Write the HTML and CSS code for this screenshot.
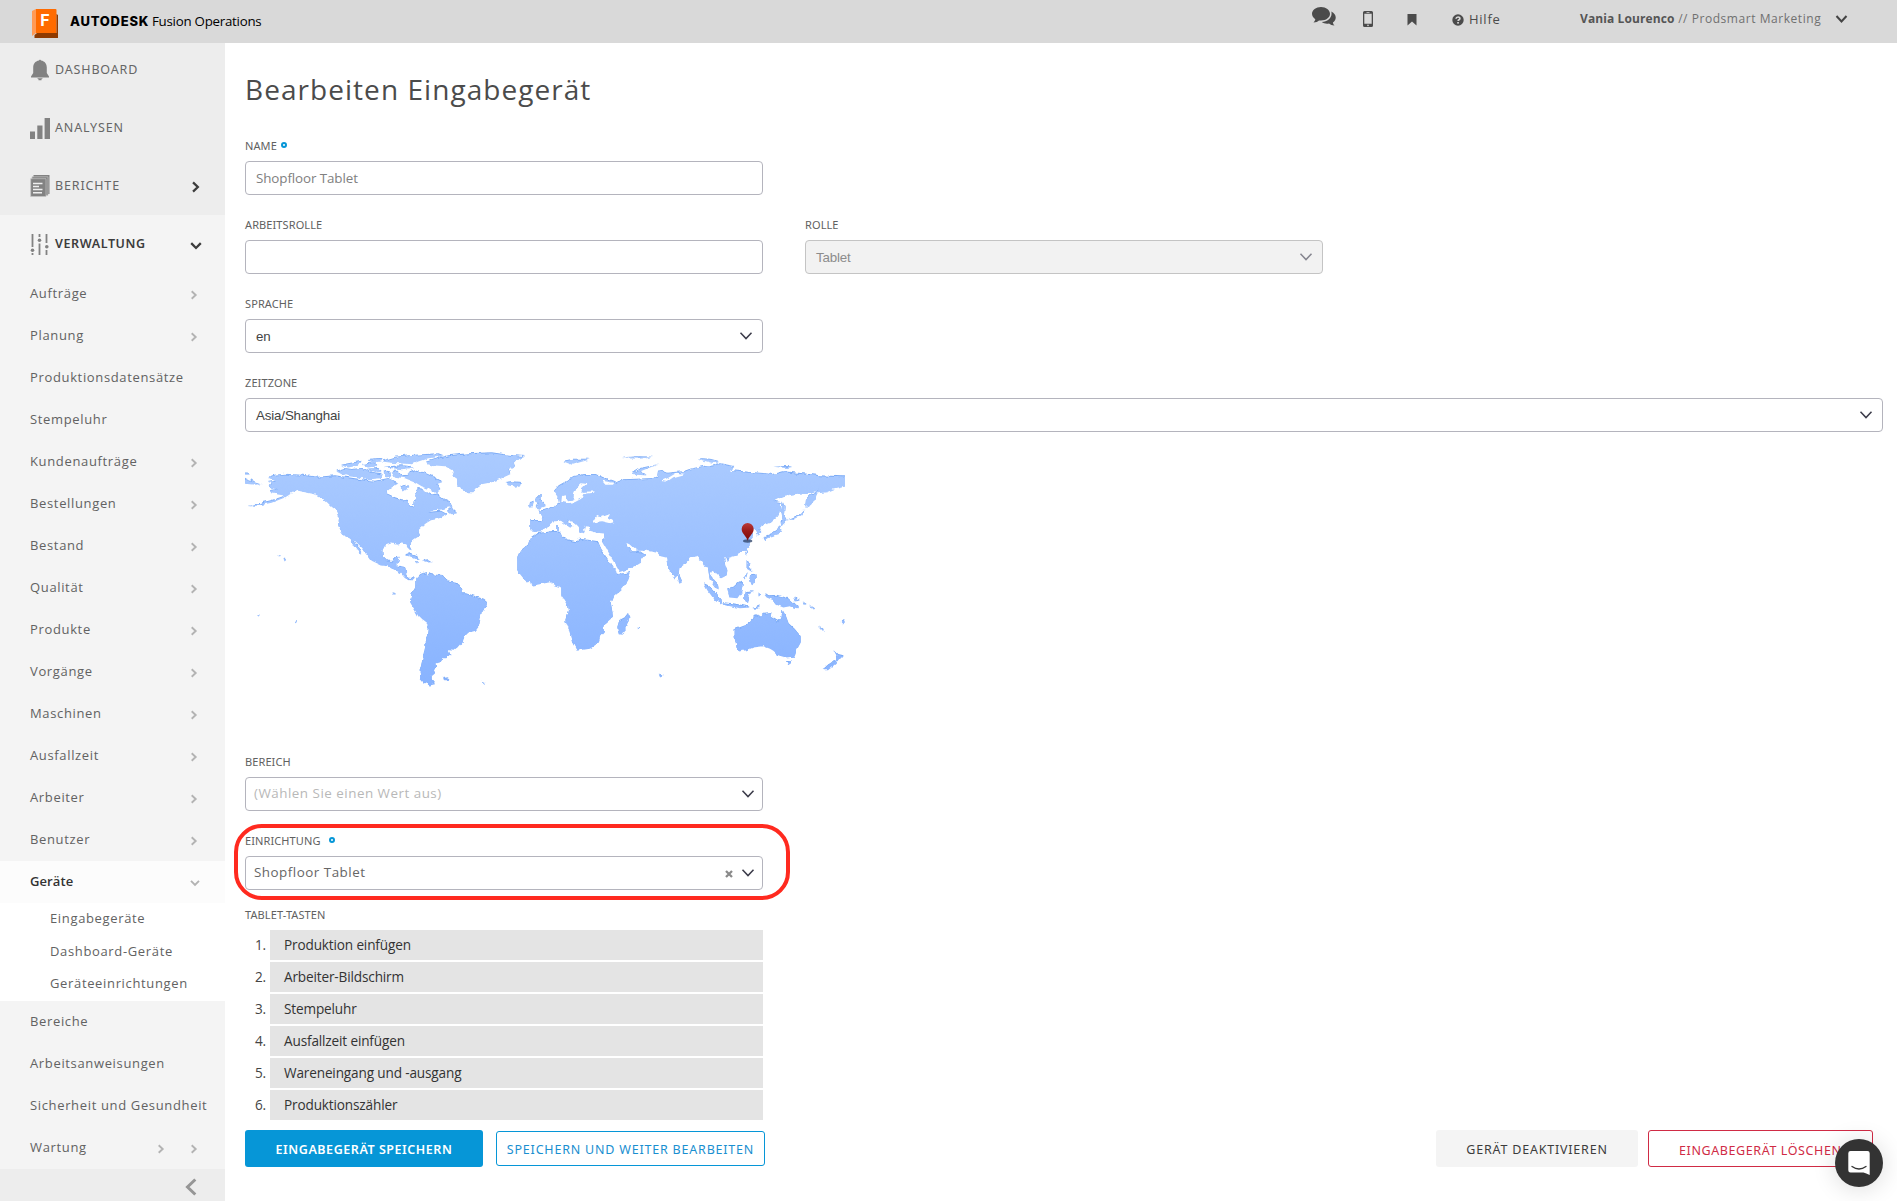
FILE: index.html
```html
<!DOCTYPE html>
<html lang="de">
<head>
<meta charset="utf-8">
<title>Bearbeiten Eingabegerät</title>
<link rel="stylesheet" href="styles.css">
</head>
<body>
<svg class="defs" width="0" height="0">
  <symbol id="right" viewBox="0 0 8 10"><path d="M1.7 1.2 5.7 5 1.7 8.8" fill="none" stroke="currentColor" stroke-width="1.9"/></symbol>
  <symbol id="down" viewBox="0 0 10 8"><path d="M1 1.8 5 5.8 9 1.8" fill="none" stroke="currentColor" stroke-width="1.9"/></symbol>
  <symbol id="caret" viewBox="0 0 14 10"><path d="M1.5 1.8 7 7.6 12.5 1.8" fill="none" stroke="currentColor" stroke-width="1.5"/></symbol>
</svg>
<header class="topbar">
  <svg class="logo" viewBox="0 0 26 29" width="26" height="29"><path d="M0 2 4 0V24L0 27Z" fill="#ff9a55"/><path d="M4 0H23.500Q24.500 0 24.500 1V24H4Z" fill="#ff6b00"/><path d="M2.500 26 5 24H24.500V5L26 6V29H2.500Z" fill="#8f3a00"/></svg>
  <span class="logo-f">F</span>
  <span class="brand">AUTODESK</span><span class="product">Fusion Operations</span>
  <div class="tools">
    <svg class="i-chat" viewBox="0 0 24 19" width="24" height="19" fill="#4b4b4b"><path d="M9 0C4 0 0 3 0 6.800 0 9 1.300 11 3.300 12.200 3 13.600 2.400 14.500 1.500 15.500 4 15.300 5.800 14.500 7 13.400 13 14.200 18 11.200 18 6.800 18 3 14 0 9 0Z"/><path d="M19.300 4.500C20.800 10 16 14.800 9.800 15 11.600 16.500 14.400 17 17 16.500 18.500 17.700 20.200 18.500 22.500 18.500 21.500 17.500 21.100 16.600 20.900 15.400 25 12.800 24.800 7 19.300 4.500Z"/></svg>
    <svg class="i-phone" viewBox="0 0 10 16" width="10" height="16"><path fill="#4b4b4b" fill-rule="evenodd" d="M1.500 0H8.500Q10 0 10 1.500V14.500Q10 16 8.500 16H1.500Q0 16 0 14.500V1.500Q0 0 1.500 0ZM1.300 2.800V12.800H8.700V2.800ZM5 13.600A.8.8 0 1 0 5 15.200.8.8 0 1 0 5 13.600ZM3.500 1V1.700H6.500V1Z"/></svg>
    <svg class="i-mark" viewBox="0 0 10 12" width="10" height="12"><path fill="#4b4b4b" d="M.500 0H9.500V11.500L5 7.500.500 11.500Z"/></svg>
    <svg class="i-help" viewBox="0 0 12 12" width="12" height="12"><circle cx="6" cy="6" r="5.700" fill="#4b4b4b"/><path d="M4 4.700C4.200 2.300 8 2.400 7.900 4.600 7.800 5.800 6.200 5.700 6.100 7" fill="none" stroke="#d9d9d9" stroke-width="1.600"/><rect x="5.200" y="8" width="1.700" height="1.600" fill="#d9d9d9"/></svg>
    <span class="help">Hilfe</span>
    <span class="user"><b>Vania Lourenco</b> // Prodsmart Marketing</span>
    <svg class="i-user" width="13" height="10" viewBox="0 0 13 10"><path d="M1.500 2 6.500 7.500 11.500 2" fill="none" stroke="#444" stroke-width="2"/></svg>
  </div>
</header>
<div class="shell">
  <nav class="side">
    <div class="mains">
      <div class="main"><svg class="mi" viewBox="0 0 20 22" width="20" height="22" fill="#828282"><path d="M9 1.500C9 .4 11 .4 11 1.500 15 2.200 16.800 5 16.800 8.500V14L19 17.500V18.500H1V17.500L3.200 14V8.500C3.200 5 5 2.200 9 1.500Z"/><path d="M7 19.300H13L11.500 20.300V21.300H8.500V20.300Z"/></svg><span>DASHBOARD</span></div>
      <div class="main"><svg class="mi" viewBox="0 0 20 22" width="20" height="22" fill="#828282"><path d="M0 14.500H5V22H0ZM7.300 8.500H12.500V22H7.300ZM14.600 1H20V22H14.600Z"/></svg><span>ANALYSEN</span></div>
      <div class="main"><svg class="mi" viewBox="0 0 20 22" width="20" height="22"><path fill="#828282" d="M3.500 0H19.500V19H3.500Z"/><path fill="#828282" stroke="#c4c4c4" stroke-width=".7" d="M2 1.800H18V20.300H2Z"/><path fill="#828282" stroke="#c4c4c4" stroke-width=".7" d="M.700 3.700H16V21.500H.700Z"/><path stroke="#eee" stroke-width="1.500" d="M3 8.500H12.500M3 11.500H9M3 14.500H12.500M3 17.700H12"/></svg><span>BERICHTE</span><svg class="go dark"><use href="#right"/></svg></div>
    </div>
    <div class="group">
      <div class="main open"><svg class="mi" viewBox="0 0 20 22" width="20" height="22" fill="#828282"><path d="M1.600 1H3.400V14H1.600ZM1.600 20H3.400V22H1.600ZM8.600 1H10.400V4H8.600ZM8.600 10.500H10.400V22H8.600ZM15.600 1H17.400V10H15.600ZM15.600 17H17.400V22H15.600Z"/><circle cx="2.500" cy="17.300" r="1.800"/><circle cx="9.500" cy="7.300" r="1.800"/><circle cx="16.800" cy="13.800" r="1.800"/></svg><span>VERWALTUNG</span><svg class="dn dark"><use href="#down"/></svg></div>
      <div class="item"><span>Aufträge</span><svg class="go"><use href="#right"/></svg></div>
      <div class="item"><span>Planung</span><svg class="go"><use href="#right"/></svg></div>
      <div class="item"><span>Produktionsdatensätze</span></div>
      <div class="item"><span>Stempeluhr</span></div>
      <div class="item"><span>Kundenaufträge</span><svg class="go"><use href="#right"/></svg></div>
      <div class="item"><span>Bestellungen</span><svg class="go"><use href="#right"/></svg></div>
      <div class="item"><span>Bestand</span><svg class="go"><use href="#right"/></svg></div>
      <div class="item"><span>Qualität</span><svg class="go"><use href="#right"/></svg></div>
      <div class="item"><span>Produkte</span><svg class="go"><use href="#right"/></svg></div>
      <div class="item"><span>Vorgänge</span><svg class="go"><use href="#right"/></svg></div>
      <div class="item"><span>Maschinen</span><svg class="go"><use href="#right"/></svg></div>
      <div class="item"><span>Ausfallzeit</span><svg class="go"><use href="#right"/></svg></div>
      <div class="item"><span>Arbeiter</span><svg class="go"><use href="#right"/></svg></div>
      <div class="item"><span>Benutzer</span><svg class="go"><use href="#right"/></svg></div>
      <div class="item active"><span>Geräte</span><svg class="dn"><use href="#down"/></svg></div>
      <div class="subs"><span>Eingabegeräte</span><span>Dashboard-Geräte</span><span>Geräteeinrichtungen</span></div>
      <div class="item"><span>Bereiche</span></div>
      <div class="item"><span>Arbeitsanweisungen</span></div>
      <div class="item"><span>Sicherheit und Gesundheit</span></div>
      <div class="item"><span>Wartung</span><svg class="go"><use href="#right"/></svg><svg class="go second"><use href="#right"/></svg></div>
    </div>
    <div class="collapse"><svg viewBox="0 0 12 18" width="12" height="18"><path d="M10.300 1.500 2.500 9 10.300 16.500" fill="none" stroke="#969696" stroke-width="3"/></svg></div>
  </nav>
  <main class="content">
    <h1>Bearbeiten Eingabegerät</h1>
    <div class="field"><label>NAME<i class="req"></i></label><div class="box muted">Shopfloor Tablet</div></div>
    <div class="pair">
      <div class="field"><label>ARBEITSROLLE</label><div class="box"></div></div>
      <div class="field"><label>ROLLE</label><div class="box native disabled"><span>Tablet</span><svg class="caret"><use href="#caret"/></svg></div></div>
    </div>
    <div class="field"><label>SPRACHE</label><div class="box native"><span>en</span><svg class="caret"><use href="#caret"/></svg></div></div>
    <div class="field wide"><label>ZEITZONE</label><div class="box native"><span>Asia/Shanghai</span><svg class="caret"><use href="#caret"/></svg></div></div>
    <svg class="map" viewBox="0 21 1800 900" width="600" height="300">
      <defs>
        <filter id="coast" filterUnits="userSpaceOnUse" x="0" y="21" width="1800" height="800" color-interpolation-filters="sRGB"><feTurbulence type="fractalNoise" baseFrequency=".06" numOctaves="2" seed="4" result="n"/><feDisplacementMap in="SourceGraphic" in2="n" scale="13" xChannelSelector="R" yChannelSelector="G"/></filter>
        <linearGradient id="sea" gradientUnits="userSpaceOnUse" x1="0" y1="30" x2="0" y2="740"><stop offset="0" stop-color="#abcbff"/><stop offset="1" stop-color="#88b3ff"/></linearGradient>
        <linearGradient id="pin" x1="0" y1="0" x2="0" y2="1"><stop offset="0" stop-color="#bb3a38"/><stop offset=".45" stop-color="#9a1a1a"/><stop offset="1" stop-color="#7c0b0b"/></linearGradient>
        <g id="land">
          <g transform="translate(-30 0)">
            <path d="M100 112 120 104 150 101 200 104 250 110 300 106 340 112 380 118 420 122 460 114 475 122 490 128 470 140 458 150 460 162 480 172 500 178 520 180 524 196 534 200 536 186 546 172 540 158 548 144 560 146 575 156 590 164 604 160 612 166 630 180 648 188 652 200 640 200 620 206 596 208 580 216 600 214 618 212 636 222 620 230 600 236 588 238 572 248 556 262 548 276 552 286 540 294 524 306 524 316 530 328 522 326 514 310 500 308 486 312 468 308 450 314 442 330 444 350 456 362 472 362 478 352 494 350 490 364 486 376 510 380 514 402 524 414 540 412 536 418 524 418 510 412 496 396 480 388 460 376 440 374 410 360 396 340 378 318 362 302 356 298 370 320 382 342 374 338 360 318 346 294 330 286 318 270 310 256 308 240 312 226 306 210 290 198 276 184 262 172 240 160 210 154 190 150 172 156 150 170 110 186 70 194 38 198 70 190 110 180 140 170 148 164 110 158 104 150 130 146 104 140 110 130 98 126 120 122Z"/>
            <path d="M636 212 650 200 654 208 666 218 650 220Z"/>
            <path d="M304 92 330 84 350 87 380 84 410 96 440 100 436 112 400 116 370 110 340 106 320 100ZM315 74 360 66 380 62 370 74 340 80ZM380 72 420 66 430 75 400 81ZM440 62 480 50 540 44 610 40 626 46 580 52 550 62 530 70 500 68 470 66ZM446 80 500 76 540 80 500 85ZM396 86 430 84 440 94 420 94ZM446 94 466 98 470 108 450 110ZM400 60 440 56 436 62 410 66Z"/>
            <path d="M470 92 488 92 500 106 520 104 524 94 540 88 570 98 600 112 622 124 604 130 616 146 600 156 580 144 560 136 540 124 510 112 480 108ZM496 140 512 134 520 142 506 152Z"/>
            <path d="M570 66 600 56 640 46 700 40 770 37 820 44 870 48 836 62 840 78 820 88 826 100 800 112 770 124 740 130 724 140 712 154 694 154 680 144 666 130 666 114 652 104 654 90 630 76 600 74Z"/>
            <path d="M812 126 830 124 860 126 858 134 840 138 820 134ZM20 110 56 122 80 130 60 132 20 128ZM20 97 42 98 40 102 20 102Z"/>
            <path d="M508 344 524 340 545 348 558 356 540 354 524 346ZM562 360 580 358 590 364 570 366ZM540 364 550 364 546 368ZM130 346 138 348 134 350ZM148 352 156 358 152 362ZM472 457 484 460 476 462ZM66 523 75 524 70 527ZM178 543 186 545 181 547ZM624 714 640 712 638 718 628 718ZM742 725 752 729 748 732Z"/>
            <path d="M544 414 556 402 572 396 576 408 582 400 600 404 622 404 634 416 650 426 672 430 682 444 680 460 696 460 720 468 744 476 756 486 754 500 740 514 736 536 732 556 722 570 700 576 688 588 684 604 668 622 658 630 640 628 646 644 634 652 618 652 616 664 604 668 606 680 596 688 600 698 590 706 590 718 600 730 584 734 566 726 556 714 554 694 560 668 566 640 572 610 578 570 578 550 560 536 550 526 540 508 526 486 526 476 530 462 542 446 544 432Z"/>
            <path d="M882 186 896 182 894 196 880 198ZM904 166 918 166 916 176 928 188 932 196 914 204 902 200 910 188 900 178Z"/>
          </g>
          <g transform="translate(885 0)">
            <path d="M-29 240 8 240 10 226-6 212 12 210 30 204 44 196 60 188 58 176 50 164 42 152 56 136 80 122 100 108 130 102 170 102 190 112 220 122 230 128 250 118 290 116 340 114 352 106 354 92 370 90 380 98 400 96 430 94 450 86 490 78 540 70 584 78 570 90 610 94 660 98 700 102 730 94 790 100 840 106 930 110 930 134 880 146 860 154 830 158 826 180 808 196 796 198 798 176 812 162 838 146 810 156 790 158 760 160 730 166 700 182 722 186 722 210 710 228 690 246 668 254 654 262 664 276 652 284 646 274 640 264 634 270 640 284 630 300 628 316 612 332 590 344 570 350 552 352 556 374 562 390 560 404 544 412 530 398 516 390 512 400 520 420 534 434 536 446 524 440 510 420 506 400 504 380 490 376 488 362 470 346 450 352 434 370 418 382 416 404 404 416 392 396 382 372 378 350 362 346 352 336 320 330 290 330 268 310 258 306 262 320 274 334 288 334 298 332 316 344 300 366 270 384 236 394 226 376 210 352 192 326 182 308 194 298 192 278 170 276 150 270 148 258 134 256 132 268 134 278 122 274 116 258 104 246 86 240 78 230 84 244 100 258 94 264 84 258 68 246 60 240 40 242 30 250 20 256 6 272-10 272-20 270-29 268Z"/>
            <path d="M276 98 300 84 356 72 330 80 300 92 320 104 290 102ZM70 62 100 56 150 56 120 64 96 72ZM245 52 300 49 340 50 300 54ZM470 54 510 56 540 64 520 67ZM700 78 760 78 740 82ZM68 290 80 292 78 298 70 296ZM48 256 54 256 54 270 48 268Z"/>
            <path d="M728 184 734 200 732 222 742 236 728 240 724 210ZM722 240 744 238 730 250 724 258ZM720 252 724 266 716 280 690 288 672 294 670 290 694 280 710 270ZM668 294 678 294 674 302ZM618 332 624 330 620 344 616 342ZM556 354 568 352 566 362ZM418 404 426 422 418 426 414 412ZM744 238 780 222 796 204 784 224 760 235Z"/>
            <path d="M620 362 628 366 626 380 640 396 620 384ZM630 406 646 404 648 424 636 430 628 420ZM610 410 624 396 614 416ZM492 430 510 438 530 460 546 480 540 488 520 472 502 448ZM546 486 580 490 610 496 630 500 600 502 560 494ZM562 444 580 440 598 424 608 430 604 456 592 472 568 470ZM614 454 640 450 622 458 630 476 618 484 612 472ZM640 504 660 496 654 504ZM656 454 662 462 656 468ZM672 460 690 466 710 464 744 474 760 488 776 504 750 496 730 500 710 492 700 478 680 470ZM760 470 780 480 764 482ZM788 484 800 492 794 492ZM806 494 824 506 818 506Z"/>
            <path d="M584 566 600 560 622 552 634 538 648 526 660 530 672 518 694 516 692 530 716 544 724 530 728 510 738 528 746 550 764 566 782 588 782 606 770 628 764 648 738 650 716 644 700 630 690 624 670 616 640 620 620 628 596 632 590 620 584 590ZM738 660 758 660 750 674 744 672ZM880 630 892 642 908 646 896 660 884 662 890 648ZM882 660 888 668 864 688 848 688 864 674ZM836 556 852 568 848 570ZM902 544 914 540 908 550ZM264 518 268 532 258 560 248 582 236 580 232 560 238 540 254 532ZM356 701 368 703 362 707ZM292 562 298 561 296 565Z"/>
            <path d="M-10 280 4 278 30 274 60 272 66 290 80 298 110 304 120 296 150 300 176 304 184 330 200 352 220 380 234 402 272 396 264 420 244 446 220 466 212 486 218 520 216 534 190 556 192 574 180 588 176 606 150 624 110 630 96 604 88 570 76 540 84 510 80 490 64 466 64 440 44 434 30 424-20 434-50 412-68 390-68 350-60 332-34 312-26 290Z"/>
          </g>
        </g>
      </defs>
      <g filter="url(#coast)">
        <use href="#land" fill="#7aaaf6"/>
        <use href="#land" fill="url(#sea)" y="2.500"/>
        <g fill="#fff" transform="translate(885 0)">
          <path d="M156 248 168 228 184 232 210 222 204 234 224 246 210 250 184 244ZM64 186 66 168 74 166 84 184 100 182 102 160 108 146 124 130 142 132 126 148 124 156 164 154 162 158 130 162 124 176 104 187 84 190ZM186 122 220 128 216 134 196 134ZM364 122 384 114 410 98 436 102 400 112 380 126ZM176 298 184 302 206 340 238 394 232 402 214 372 194 340Z"/>
        </g>
      </g>
      <ellipse cx="1508" cy="303" rx="14" ry="5" fill="#33486e" opacity=".8"/>
      <path d="M1508 302C1504 288 1490 281 1490 267A18 18 0 0 1 1526 267C1526 281 1512 288 1508 302Z" fill="url(#pin)"/>
    </svg>
    <div class="field"><label>BEREICH</label><div class="box pick ghost"><span>(Wählen Sie einen Wert aus)</span><svg class="caret"><use href="#caret"/></svg></div></div>
    <div class="field marked"><label>EINRICHTUNG<i class="req far"></i></label><div class="box pick"><span>Shopfloor Tablet</span><svg class="clear" width="8" height="8" viewBox="0 0 8 8"><path d="M1 1 7 7M7 1 1 7" stroke="#8a8a8a" stroke-width="2.300"/></svg><svg class="caret"><use href="#caret"/></svg></div><div class="highlight"></div></div>
    <label>TABLET-TASTEN</label>
    <ol class="keys">
      <li><span>1.</span><div>Produktion einfügen</div></li>
      <li><span>2.</span><div>Arbeiter-Bildschirm</div></li>
      <li><span>3.</span><div>Stempeluhr</div></li>
      <li><span>4.</span><div>Ausfallzeit einfügen</div></li>
      <li><span>5.</span><div>Wareneingang und -ausgang</div></li>
      <li><span>6.</span><div>Produktionszähler</div></li>
    </ol>
    <div class="actions">
      <button class="btn save">EINGABEGERÄT SPEICHERN</button>
      <button class="btn keep">SPEICHERN UND WEITER BEARBEITEN</button>
      <button class="btn off">GERÄT DEAKTIVIEREN</button>
      <button class="btn del">EINGABEGERÄT LÖSCHEN</button>
    </div>
  </main>
</div>
<div class="chat"><svg viewBox="0 0 22 24" width="22" height="24"><path d="M2.500 0H19.500Q21.700 0 21.700 2.200V24Q18 22 15.500 21.500H2.500Q.3 21.500.3 19.300V2.200Q.3 0 2.500 0Z" fill="#fff"/><path d="M4 15.500Q11 20.500 18 15.500" fill="none" stroke="#333" stroke-width="1.300" stroke-linecap="round"/></svg></div>
</body>
</html>
```
FILE: styles.css
```css
* { box-sizing: border-box; }
body {
  margin: 0;
  height: 1201px;
  overflow: hidden;
  background: #fff;
  color: #4f4f4f;
  font: 13px "Open Sans", sans-serif;
}
.defs { position: absolute; }
svg { flex: none; }

/* Top bar */
.topbar {
  display: flex;
  align-items: flex-start;
  height: 43px;
  padding-left: 32px;
  background: #d9d9d9;
  white-space: nowrap;
}
.logo { margin-top: 9px; }
.logo-f {
  width: 16px;
  margin: 11px 17px 0 -21px;
  color: #fff;
  font: 700 16px/18px Inter, sans-serif;
  text-align: center;
}
.brand {
  width: 82px;
  color: #000;
  font: 800 13px/20px Inter, sans-serif;
  letter-spacing: .75px;
  margin-top: 11px;
}
.product {
  color: #000;
  font-size: 13.300px;
  font-weight: 500;
  line-height: 20px;
  letter-spacing: -.25px;
  margin-top: 11px;
}
.tools { display: flex; align-items: flex-start; margin-left: auto; width: 585px; }
.i-chat { margin-top: 7px; }
.i-phone { margin: 11px 0 0 27px; }
.i-mark { margin: 14px 0 0 34px; }
.i-help { margin: 14px 0 0 35px; }
.help { margin: 9px 0 0 5px; width: 111px; line-height: 20px; letter-spacing: .75px; color: #4b4b4b; }
.user { margin-top: 9px; width: 255px; font-size: 12px; font-weight: 500; line-height: 20px; letter-spacing: .55px; color: #707070; }
.user b { color: #555; font-weight: 700; letter-spacing: .1px; }
.i-user { margin-top: 14px; }

.shell { display: flex; height: 1158px; }

/* Sidebar */
.side { display: flex; flex-direction: column; width: 225px; flex: none; background: #ededed; }
.mains { height: 172px; display: flex; flex-direction: column; justify-content: flex-end; }
.main {
  display: flex;
  align-items: center;
  flex: none;
  height: 58px;
  padding-left: 30px;
  color: #666;
  font: 12.500px "Noto Sans", sans-serif;
  letter-spacing: .85px;
}
.mains .main:first-child { height: 56px; padding-bottom: 2px; }
.main span { flex: 1; margin: -1px 0 0 5px; }
.main.open { color: #3c3c3c; font-weight: 600; letter-spacing: .6px; }
.go { width: 8px; height: 10px; margin: 2px 27px 0 0; color: #b3b3b3; }
.dn { width: 10px; height: 8px; margin: 2px 25px 0 0; color: #b3b3b3; }
.main .go { width: 9.600px; height: 12px; margin-right: 24px; }
.main .dn { width: 12px; height: 9.600px; margin: 3px 23px 0 0; }
.dark { color: #3c3c3c; }
.group { background: #f4f4f4; }
.item { display: flex; align-items: center; height: 42px; padding-left: 30px; color: #626262; letter-spacing: .65px; white-space: nowrap; }
.item span { flex: 1; margin-top: -2px; }
.item .second { margin-left: -2px; }
.item.active { background: #fcfcfc; color: #333; font-weight: 600; letter-spacing: .1px; }
.subs { display: flex; flex-direction: column; height: 98px; padding-left: 50px; background: #fff; color: #626262; letter-spacing: .65px; line-height: 32.500px; }
.subs span { margin-top: -1px; margin-bottom: 1px; }
.collapse { flex: 1; padding: 9px 0 0 185px; }

/* Form */
.content { flex: 1; padding-left: 20px; }
h1 { margin: 0; height: 88px; padding-top: 27px; font-size: 28px; font-weight: 400; line-height: 38px; letter-spacing: 1.050px; color: #4b4b4b; }
.pair { display: flex; gap: 42px; }
.field { width: 518px; margin-bottom: 15px; }
.field.wide { width: 1638px; }
label { display: flex; align-items: center; height: 30px; padding-bottom: 2px; font: 11px "Noto Sans", sans-serif; letter-spacing: .1px; color: #616161; }
.req { width: 6px; height: 6px; margin-left: 4px; border: 2px solid #0696d7; border-radius: 50%; }
.req.far { margin-left: 8px; }
.box {
  display: flex;
  align-items: center;
  height: 34px;
  padding: 0 9px 0 10px;
  border: 1px solid #b4b4bd;
  border-radius: 4px;
  background: #fff;
}
.box span { flex: 1; }
.muted { font-size: 13.400px; letter-spacing: -.1px; color: #808080; }
.native { font: 13.333px "Liberation Sans", Arial, sans-serif; color: #444; letter-spacing: -.15px; }
.disabled { background: #f2f2f2; border-color: #c4c4c4; color: #8c8c8c; }
.caret { width: 14px; height: 10px; color: #3c3c4a; }
.disabled .caret { color: #85858f; }
.pick { padding: 0 7px 0 8px; font-size: 13.400px; letter-spacing: .5px; color: #666; }
.pick span { margin-top: -2px; }
.ghost span { color: #b8b8b8; }
.clear { margin: 1px 8px 0 0; }
.map { display: block; margin: 0; }
.marked { position: relative; margin-bottom: 10px; }
.highlight { position: absolute; left: -11px; top: -2px; width: 556px; height: 76px; border: 4px solid #ff2a1f; border-radius: 28px; }
.keys { display: flex; flex-direction: column; gap: 2px; width: 518px; margin: 0; padding: 0; list-style: none; font-size: 13.600px; letter-spacing: -.15px; color: #333; line-height: 30px; }
.keys li { display: flex; }
.keys span { width: 25px; padding-right: 4px; text-align: right; color: #444; }
.keys div { flex: 1; padding-left: 14px; background: #e4e4e4; }

/* Buttons */
.actions { display: flex; margin-top: 10px; height: 37px; }
.btn { padding: 2px 0 0; border: 0; border-radius: 3px; font: 12.500px "Noto Sans", sans-serif; letter-spacing: .8px; white-space: nowrap; }
.save { width: 238px; background: #0696d7; color: #fff; font-weight: 600; letter-spacing: .55px; }
.keep { width: 269px; height: 35px; margin: 1px 0 0 13px; border: 1px solid #0696d7; background: #fff; color: #1a8fd0; }
.off { width: 202px; margin-left: 671px; background: #f4f4f4; color: #3c3c3c; }
.del { width: 225px; margin-left: 10px; padding: 3px 0 0 30px; border: 1px solid #d02b45; background: #fff; color: #d02b45; text-align: left; letter-spacing: .6px; }

/* Support launcher */
.chat { position: absolute; left: 1835px; top: 1139px; display: flex; align-items: center; justify-content: center; width: 48px; height: 48px; border-radius: 50%; background: #333; box-shadow: 0 2px 24px rgba(0, 0, 0, .14); }
```
